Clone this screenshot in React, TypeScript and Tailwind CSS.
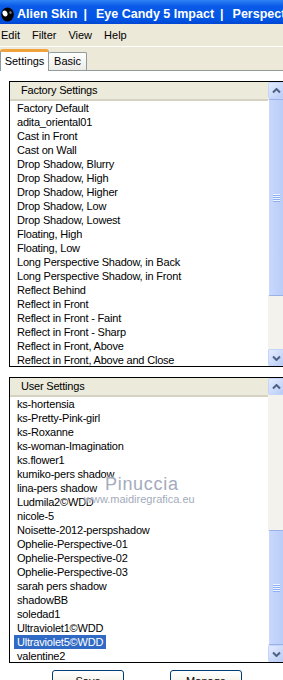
const factory = [
  "Factory Default",
  "adita_oriental01",
  "Cast in Front",
  "Cast on Wall",
  "Drop Shadow, Blurry",
  "Drop Shadow, High",
  "Drop Shadow, Higher",
  "Drop Shadow, Low",
  "Drop Shadow, Lowest",
  "Floating, High",
  "Floating, Low",
  "Long Perspective Shadow, in Back",
  "Long Perspective Shadow, in Front",
  "Reflect Behind",
  "Reflect in Front",
  "Reflect in Front - Faint",
  "Reflect in Front - Sharp",
  "Reflect in Front, Above",
  "Reflect in Front, Above and Close",
];

const user = [
  "ks-hortensia",
  "ks-Pretty-Pink-girl",
  "ks-Roxanne",
  "ks-woman-Imagination",
  "ks.flower1",
  "kumiko-pers shadow",
  "lina-pers shadow",
  "Ludmila2©WDD",
  "nicole-5",
  "Noisette-2012-perspshadow",
  "Ophelie-Perspective-01",
  "Ophelie-Perspective-02",
  "Ophelie-Perspective-03",
  "sarah pers shadow",
  "shadowBB",
  "soledad1",
  "Ultraviolet1©WDD",
  "Ultraviolet5©WDD",
  "valentine2",
];

function Arrow({ down }: { down?: boolean }) {
  return (
    <svg width="9" height="6" viewBox="0 0 9 6">
      <path
        d={down ? "M1 1.5 L4.5 5 L8 1.5" : "M1 4.5 L4.5 1 L8 4.5"}
        fill="none"
        stroke="#4d6185"
        strokeWidth="2"
      />
    </svg>
  );
}

function ScrollButton({ down }: { down?: boolean }) {
  return (
    <div className="flex h-[17px] items-center justify-center rounded-[2px] border border-[#c3d3fd] bg-[linear-gradient(135deg,#e4ecfe,#b7cbf7)]">
      <Arrow down={down} />
    </div>
  );
}

function Thumb({ h }: { h: string }) {
  return (
    <div
      className={`${h} flex flex-col items-center justify-center gap-[1px] rounded-[2px] border border-[#98b1e6] border-l-white bg-[linear-gradient(90deg,#c9d8fc,#b8ccf8)]`}
    >
      {Array.from({ length: 4 }).map((_, i) => (
        <div key={i} className="h-[1px] w-[7px] bg-[#eef4fe] shadow-[0_1px_0_#8cb0f8]" />
      ))}
    </div>
  );
}

function ListBox({
  title,
  items,
  selected,
  bar,
  children,
}: {
  title: string;
  items: string[];
  selected?: string;
  bar: React.ReactNode;
  children?: React.ReactNode;
}) {
  return (
    <div className="relative ml-[9px] flex h-[286px] w-[277px] shrink-0 border border-black bg-white">
      <div className="flex w-[258px] flex-col overflow-hidden">
        <div className="h-[19px] shrink-0 border-b-2 border-[#d6d2c2] bg-[#ebeadb] pl-[11px] leading-[17px]">
          {title}
        </div>
        <div className="flex-1 overflow-hidden">
          {items.map((t) => (
            <div key={t} className="h-[14px] whitespace-nowrap pl-[4px] leading-[14px]">
              <span
                className={
                  t === selected ? "inline-block bg-[#316ac5] px-[3px] text-white" : "inline-block px-[3px]"
                }
              >
                {t}
              </span>
            </div>
          ))}
        </div>
      </div>
      <div className="flex w-[17px] flex-col bg-[#f4f2ec]">{bar}</div>
      {children}
    </div>
  );
}

export default function App() {
  return (
    <div className="h-[680px] w-[283px] overflow-hidden bg-white font-['Liberation_Sans',Arial,sans-serif] text-[11px] tracking-[-0.2px] text-black">
      {/* title bar */}
      <div className="flex h-[24px] items-center whitespace-nowrap bg-[linear-gradient(to_bottom,#2f83f7,#0a5ae8_25%,#0055e5_80%,#0046d2)] pl-[1px] pt-[5px] text-[12.5px] font-bold tracking-normal text-white">
        <svg width="13" height="15" viewBox="0 0 13 15" className="mr-[3px] shrink-0">
          <ellipse cx="6.5" cy="7.5" rx="6.3" ry="7" fill="#000" />
          <ellipse cx="4" cy="6.5" rx="2.4" ry="3" fill="#fff" transform="rotate(-25 4 6.5)" />
          <ellipse cx="9.5" cy="5.5" rx="1.2" ry="1.6" fill="#777" />
        </svg>
        <span>Alien Skin</span>
        <span className="ml-[6px] mr-[9px]">|</span>
        <span>Eye Candy 5 Impact</span>
        <span className="ml-[6px] mr-[9px]">|</span>
        <span>Perspective Shadow</span>
      </div>

      {/* menu */}
      <div className="flex h-[23px] items-center gap-[12px] border-b border-white bg-[#ece9d8] pl-[1px] tracking-normal">
        <span>Edit</span>
        <span>Filter</span>
        <span>View</span>
        <span>Help</span>
      </div>

      {/* tabs */}
      <div className="flex h-[24px] items-end border-b border-[#919b9c] bg-[#ece9d8] tracking-normal">
        <div className="relative z-10 -mb-px flex h-[22px] w-[49px] items-center justify-center rounded-t-[3px] border-x border-t-[3px] border-x-[#919b9c] border-t-[#f0a33a] bg-white pb-[1px]">
          Settings
        </div>
        <div className="flex h-[18px] w-[38px] items-center justify-center rounded-t-[2px] border-r border-t border-[#919b9c] bg-[linear-gradient(to_bottom,#ffffff,#ecebe6)]">
          Basic
        </div>
      </div>

      {/* panel */}
      <div className="flex flex-col pt-[10px]">
        <ListBox
          title="Factory Settings"
          items={factory}
          bar={
            <>
              <ScrollButton />
              <Thumb h="h-[197px]" />
              <div className="h-[53px]" />
              <ScrollButton down />
            </>
          }
        />
        <div className="h-[10px]" />
        <ListBox
          title="User Settings"
          items={user}
          selected="Ultraviolet5©WDD"
          bar={
            <>
              <ScrollButton />
              <div className="h-[135px]" />
              <Thumb h="h-[115px]" />
              <ScrollButton down />
            </>
          }
        >
          <div className="pointer-events-none absolute left-[95px] top-[96px] text-[18px] leading-[20px] tracking-[0.7px] text-[#a3abbc] [text-shadow:0_0_2px_#fff]">
            Pinuccia
          </div>
          <div className="pointer-events-none absolute left-[74px] top-[115px] text-[11px] leading-[12px] tracking-normal text-[#a3abbc] [text-shadow:0_0_2px_#fff]">
            www.maidiregrafica.eu
          </div>
        </ListBox>

        {/* buttons */}
        <div className="mt-[7px] flex gap-[46px] pl-[52px] tracking-normal">
          <div className="flex h-[23px] w-[72px] items-center justify-center rounded-[3px] border border-[#003c74] bg-[linear-gradient(to_bottom,#ffffff,#ece9d8)]">
            Save
          </div>
          <div className="flex h-[23px] w-[72px] items-center justify-center rounded-[3px] border border-[#003c74] bg-[linear-gradient(to_bottom,#ffffff,#ece9d8)]">
            Manage
          </div>
        </div>
      </div>
    </div>
  );
}
